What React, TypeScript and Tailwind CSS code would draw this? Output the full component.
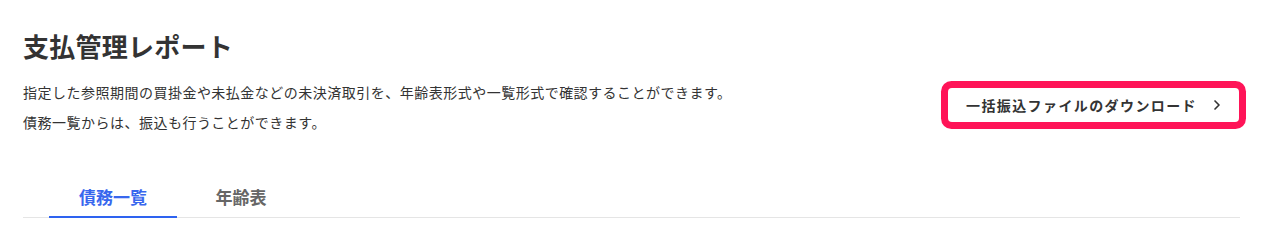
import { ChevronRight } from "lucide-react";

const tabs = ["債務一覧", "年齢表"];

export default function App() {
  const active = 0;

  return (
    <main
      className="w-[1263px] h-[229px] bg-white px-[23px] pt-[26px] text-[#333]"
      style={{ fontFamily: '"Noto Sans CJK JP", "Noto Sans", sans-serif' }}
    >
      <h1 className="text-[26px] font-bold leading-[40px] tracking-[0.01em]">支払管理レポート</h1>

      <div className="flex justify-between items-start mt-[11px]">
        <div className="text-[14px] leading-[30px] tracking-[0.035em]">
          <p>指定した参照期間の買掛金や未払金などの未決済取引を、年齢表形式や一覧形式で確認することができます。</p>
          <p>債務一覧からは、振込も行うことができます。</p>
        </div>
        <button className="mt-[11px] mr-[1px] flex items-center w-[291px] h-[34px] pl-[18px] pr-[14px] bg-white rounded-[4px] ring-[7px] ring-[#ff1458] outline-none">
          <span className="text-[14px] font-bold tracking-[0.1em] text-[#333] whitespace-nowrap">一括振込ファイルのダウンロード</span>
          <ChevronRight className="ml-auto w-[16px] h-[16px] text-[#333]" strokeWidth={2.5} />
        </button>
      </div>

      <div className="mt-[41px] flex pl-[26px] border-b border-[#e5e5e5]">
        {tabs.map((t, i) => (
          <div
            key={t}
            className={
              i === active
                ? "w-[128px] text-center text-[17px] font-bold leading-[38px] text-[#3867ee] border-b-2 border-[#2e63f0] -mb-px"
                : "w-[128px] text-center text-[17px] font-bold leading-[38px] text-[#666]"
            }
          >
            {t}
          </div>
        ))}
      </div>
    </main>
  );
}
